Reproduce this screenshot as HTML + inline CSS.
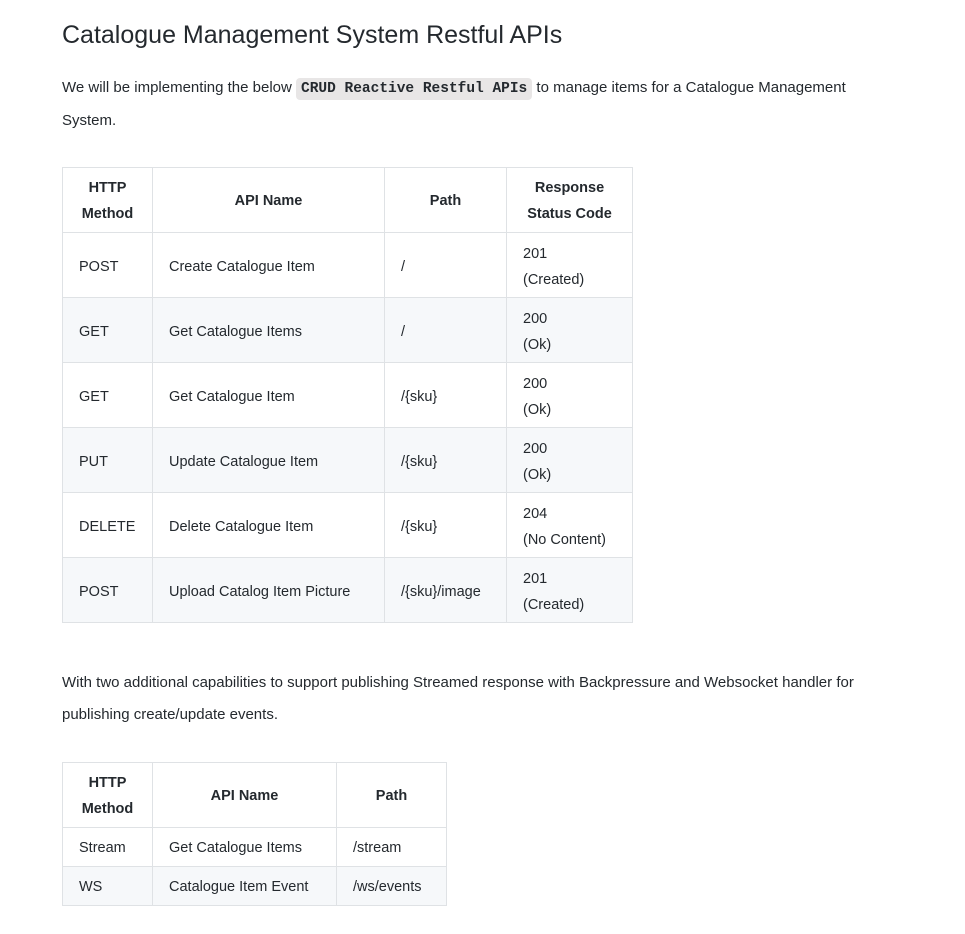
<!DOCTYPE html>
<html><head><meta charset="utf-8"><style>
body{margin:0;background:#fff;font-family:"Liberation Sans",sans-serif;color:#24292e;}
h1{position:absolute;left:62px;top:18px;margin:0;font-size:25px;font-weight:normal;line-height:34px;}
p{position:absolute;left:62px;margin:0;font-size:15px;line-height:32px;}
code{font-family:"Liberation Mono",monospace;font-weight:bold;font-size:14.5px;background:#e8e6e6;border-radius:4px;padding:3px 5px;}
table{position:absolute;left:62px;border-collapse:collapse;font-size:14.5px;table-layout:fixed;}
td,th{border:1px solid #dfe2e5;padding:0 16px;line-height:26px;text-align:left;box-sizing:border-box;white-space:nowrap;overflow:hidden;}
th{text-align:center;font-weight:bold;padding-top:2px}
tr.h{height:65px}
tr.r{height:65px}
tr.s{height:39px}
tr.r td{padding-top:3px}
tr.s td{padding-top:2px}
tr.g td{background:#f6f8fa}
</style></head><body>
<h1>Catalogue Management System Restful APIs</h1>
<p style="top:72px;width:840px">We will be implementing the below <code>CRUD Reactive Restful APIs</code> to manage items for a Catalogue Management System.</p>
<table style="top:167px;width:570px">
<colgroup><col style="width:90px"><col style="width:232px"><col style="width:122px"><col style="width:126px"></colgroup>
<tr class="h"><th>HTTP<br>Method</th><th>API Name</th><th>Path</th><th>Response<br>Status Code</th></tr>
<tr class="r"><td>POST</td><td>Create Catalogue Item</td><td>/</td><td>201<br>(Created)</td></tr>
<tr class="r g"><td>GET</td><td>Get Catalogue Items</td><td>/</td><td>200<br>(Ok)</td></tr>
<tr class="r"><td>GET</td><td>Get Catalogue Item</td><td>/{sku}</td><td>200<br>(Ok)</td></tr>
<tr class="r g"><td>PUT</td><td>Update Catalogue Item</td><td>/{sku}</td><td>200<br>(Ok)</td></tr>
<tr class="r"><td>DELETE</td><td>Delete Catalogue Item</td><td>/{sku}</td><td>204<br>(No Content)</td></tr>
<tr class="r g"><td>POST</td><td>Upload Catalog Item Picture</td><td>/{sku}/image</td><td>201<br>(Created)</td></tr>
</table>
<p style="top:667px;width:860px">With two additional capabilities to support publishing Streamed response with Backpressure and Websocket handler for publishing create/update events.</p>
<table style="top:762px;width:384px">
<colgroup><col style="width:90px"><col style="width:184px"><col style="width:110px"></colgroup>
<tr class="h"><th>HTTP<br>Method</th><th>API Name</th><th>Path</th></tr>
<tr class="s"><td>Stream</td><td>Get Catalogue Items</td><td>/stream</td></tr>
<tr class="s g"><td>WS</td><td>Catalogue Item Event</td><td>/ws/events</td></tr>
</table>
</body></html>
